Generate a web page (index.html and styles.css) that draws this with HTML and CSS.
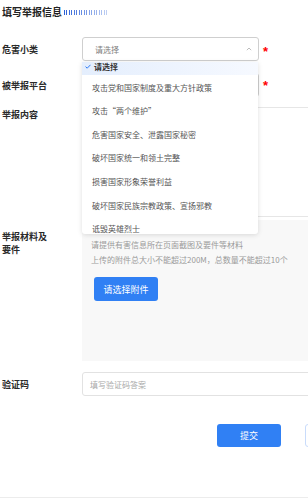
FILE: index.html
```html
<!DOCTYPE html>
<html lang="zh">
<head>
<meta charset="utf-8">
<link rel="stylesheet" href="styles.css">
</head>
<body>
<div class="page">
  <div class="title"><span>填写举报信息</span><i class="stripes"></i></div>

  <div class="row r1">
    <div class="label">危害小类</div>
    <div class="field">
      <div class="select open">
        <span class="ph">请选择</span>
        <svg class="chev" width="6" height="4" viewBox="0 0 6 4"><polyline points="0.8,3.2 3,1 5.2,3.2" fill="none" stroke="#b5b5b5" stroke-width="0.9"/></svg>
      </div>
      <span class="req">*</span>
    </div>
  </div>

  <div class="row r2">
    <div class="label">被举报平台</div>
    <div class="field">
      <div class="select"></div>
      <span class="req">*</span>
    </div>
  </div>

  <div class="row r3">
    <div class="label top">举报内容</div>
    <div class="field"><div class="textarea"></div></div>
  </div>

  <div class="row r4">
    <div class="label top two">举报材料及<br>要件</div>
    <div class="field">
      <div class="upload">
        <p class="hint">请提供有害信息所在页面截图及要件等材料</p>
        <p class="hint">上传的附件总大小不能超过200M，总数量不能超过10个</p>
        <button class="btn pick">请选择附件</button>
      </div>
    </div>
  </div>

  <div class="row r5">
    <div class="label">验证码</div>
    <div class="field"><div class="input"><span class="ph2">填写验证码答案</span></div></div>
  </div>

  <div class="actions">
    <button class="btn submit">提交</button>
    <button class="btn ghost" aria-label="重置"></button>
  </div>

  <div class="dropdown">
    <div class="opt sel"><svg class="check" width="6" height="5" viewBox="0 0 6 5"><polyline points="0.5,2.6 2.2,4.2 5.5,0.8" fill="none" stroke="#2f7cf6" stroke-width="1"/></svg>请选择</div>
    <div class="opt">攻击党和国家制度及重大方针政策</div>
    <div class="opt">攻击“两个维护”</div>
    <div class="opt">危害国家安全、泄露国家秘密</div>
    <div class="opt">破坏国家统一和领土完整</div>
    <div class="opt">损害国家形象荣誉利益</div>
    <div class="opt">破坏国家民族宗教政策、宣扬邪教</div>
    <div class="opt">诋毁英雄烈士</div>
  </div>
</div>
</body>
</html>
```

FILE: styles.css
```css
* { box-sizing: border-box; }
html, body { margin: 0; padding: 0; background: #fff; }
body {
  width: 308px;
  height: 500px;
  overflow: hidden;
  font-family: "Noto Sans CJK SC", "Noto Sans", sans-serif;
  color: #333;
}
.page {
  position: relative;
  height: 498px;
  border-bottom: 1px solid #ececec;
  padding-left: 2px;
}
.title {
  display: flex;
  align-items: center;
  padding-top: 5px;
  height: 19px;
  font-size: 10px;
  line-height: 14px;
  font-weight: 700;
  color: #222;
}
.stripes {
  display: block;
  width: 43px;
  height: 5px;
  margin-left: 2px;
  margin-top: 1px;
  background-image:
    linear-gradient(90deg, rgba(255,255,255,0) 0%, rgba(255,255,255,0.7) 100%),
    repeating-linear-gradient(90deg, #2a5fd6 0 1px, transparent 1px 2.5px);
}
.row {
  display: grid;
  grid-template-columns: 80px 240px;
}
.label {
  font-size: 9px;
  font-weight: 700;
  color: #2a2a2a;
  line-height: 13px;
  align-self: center;
  white-space: nowrap;
}
.label.top { align-self: start; padding-top: 1px; }
.label.two { padding-top: 10px; }
.field { display: flex; align-items: flex-start; }
.r1 { margin-top: 18px; height: 24px; }
.r2 { margin-top: 12px; height: 24px; }
.r3 { margin-top: 10px; }
.r4 { margin-top: 3px; }
.r5 { margin-top: 11px; }
.select {
  width: 177px;
  height: 24px;
  border: 1px solid #cfcfcf;
  border-radius: 3px;
  display: flex;
  align-items: center;
  justify-content: space-between;
  padding: 0 6px 0 12px;
  background: #fff;
}
.ph { font-size: 8px; color: #7e7e7e; }
.chev { display: block; margin-top: -1px; }
.req {
  margin-left: 4px;
  font-family: "Liberation Sans", sans-serif;
  font-size: 13px;
  font-weight: 700;
  color: #f00;
  line-height: 13px;
  padding-top: 8px;
}
.r2 .req { padding-top: 6px; }
.textarea {
  width: 240px;
  height: 110px;
  border: 1px solid #e6e6e6;
  border-radius: 3px;
  background: #fff;
}
.upload {
  width: 240px;
  height: 141px;
  background: #f8f8f8;
  padding: 17px 0 0 9px;
}
.hint {
  margin: 0;
  font-size: 8px;
  line-height: 15px;
  color: #9a9a9a;
  white-space: nowrap;
}
.btn {
  border: 0;
  border-radius: 3px;
  font-family: "Noto Sans CJK SC", sans-serif;
  font-size: 9px;
  color: #fff;
  background: #3080f4;
  padding: 0;
}
.pick {
  display: block;
  width: 64px;
  height: 24px;
  margin: 10px 0 0 3px;
}
.input {
  width: 240px;
  height: 24px;
  border: 1px solid #e2e2e2;
  border-radius: 3px;
  display: flex;
  align-items: center;
  padding-left: 7px;
}
.ph2 { font-size: 8px; color: #a8a8a8; }
.actions {
  display: flex;
  gap: 24px;
  margin-top: 28px;
  padding-left: 215px;
}
.submit { width: 64px; height: 23px; flex: none; }
.ghost {
  width: 64px;
  height: 23px;
  flex: none;
  background: #fff;
  border: 1px solid #c9dcfb;
}
.dropdown {
  position: absolute;
  left: 82px;
  top: 62px;
  width: 176px;
  height: 172px;
  background: #fff;
  overflow: hidden;
  border-radius: 0 0 3px 3px;
  box-shadow: 0 1px 5px rgba(0,0,0,0.13);
}
.opt {
  height: 23.67px;
  display: flex;
  align-items: center;
  padding-left: 10px;
  font-size: 8px;
  color: #555;
  white-space: nowrap;
}
.opt.sel {
  height: 13.2px;
  align-items: flex-start;
  line-height: 10px;
  padding-left: 2px;
  font-weight: 700;
  color: #333;
  background: linear-gradient(90deg, #e4eefd 0%, #f6f9ff 100%);
}
.check { display: block; margin: 2px 3px 0 1px; }
```
